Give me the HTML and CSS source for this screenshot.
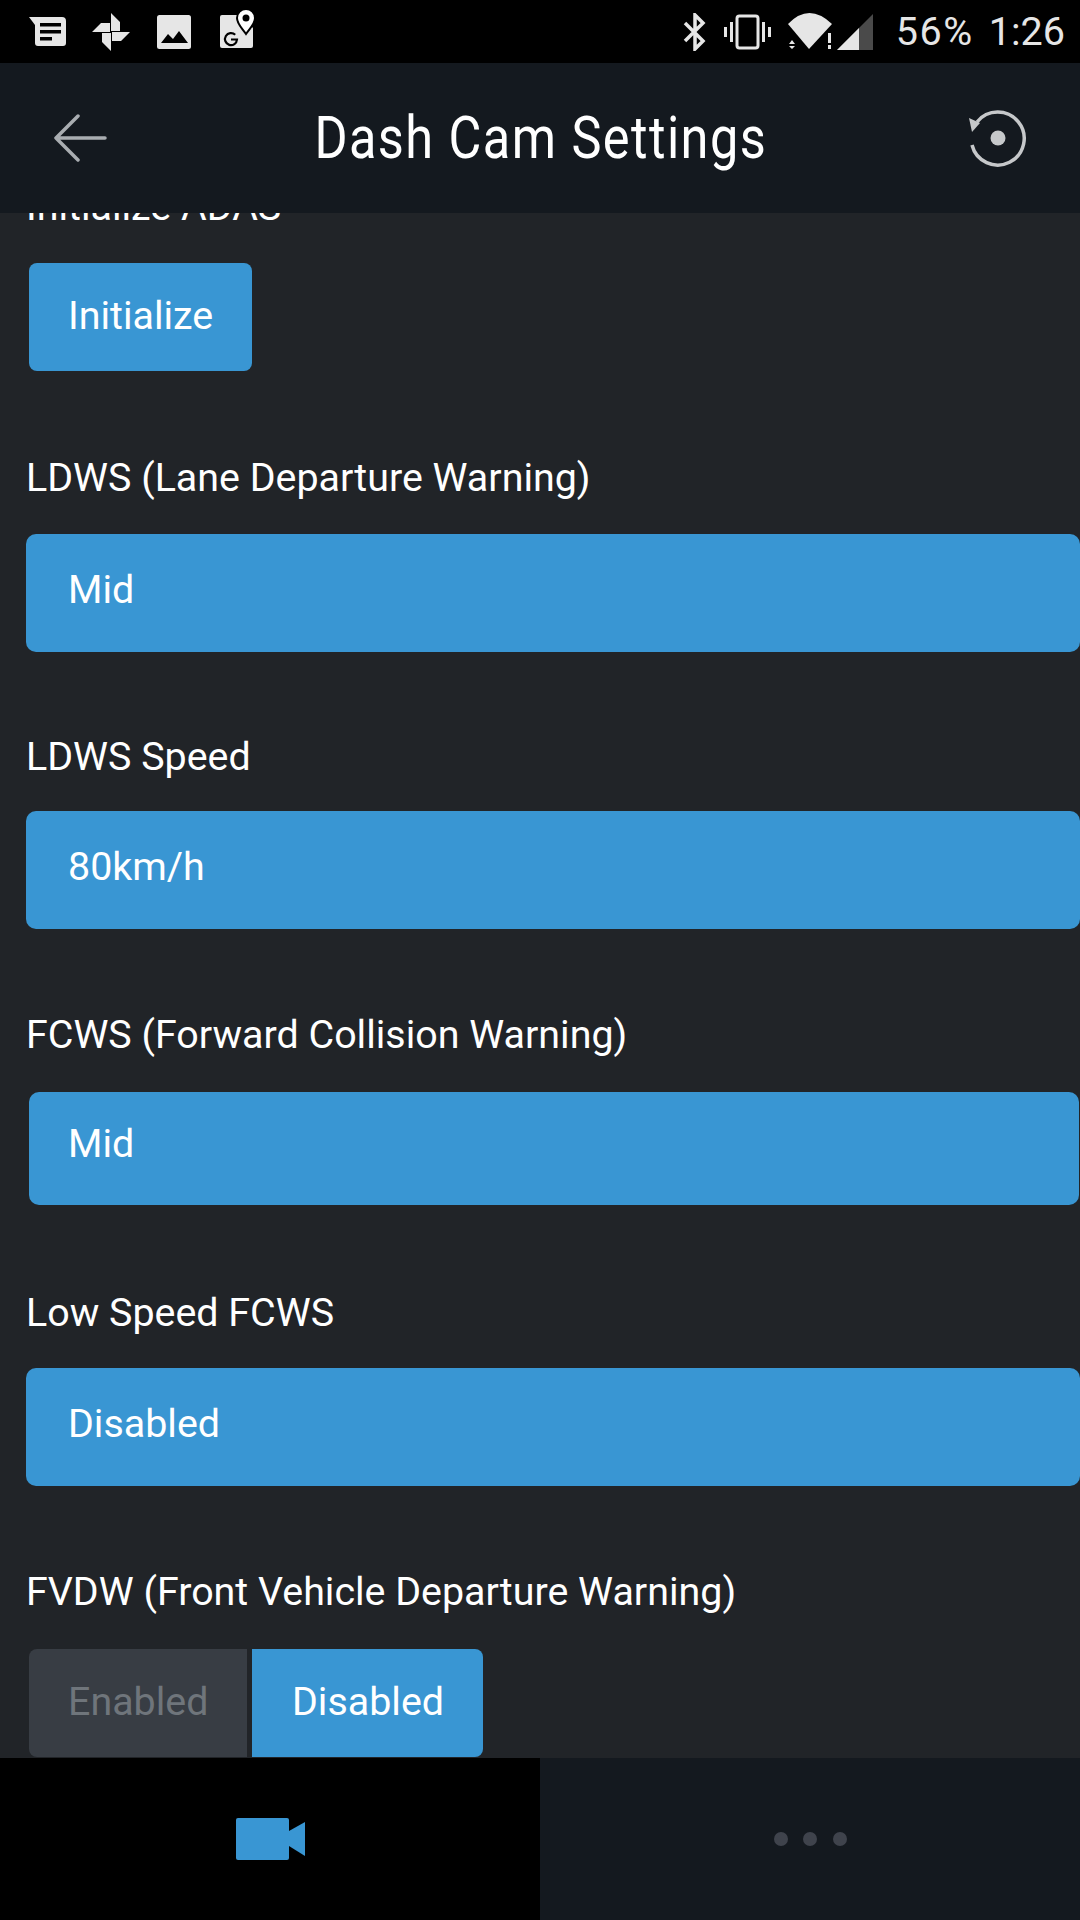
FILE: index.html
```html
<!DOCTYPE html>
<html lang="en">
<head>
    <meta charset="UTF-8">
    <meta name="viewport" content="width=device-width, initial-scale=1.0">
    <title>Dash Cam Settings</title>
    <link rel="stylesheet" href="styles.css">
</head>
<body>
    <div class="app">
        <div class="statusBar">
            <div class="statusLeft">
                <svg class="sIcon news" viewBox="0 0 38 32"><path d="M0 1h33a4 4 0 0 1 4 4v22a3 3 0 0 1-3 3H9a3 3 0 0 1-3-3V9z" fill="#e6e6e6"/><path d="M11 7h21v3.500H11zM11 14h21v3.500H11zM11 21h12v3.500H11z" fill="#000"/></svg>
                <svg class="sIcon photos" viewBox="0 0 38 38"><g fill="#e6e6e6"><path d="M19 18V0l9 9v9zM20 19h18l-9 9h-9zM19 20v18l-9-9v-9zM18 19H0l9-9h9z"/></g></svg>
                <svg class="sIcon gallery" viewBox="0 0 34 34"><rect width="34" height="34" rx="2.500" fill="#e6e6e6"/><path d="M4 28l7-9 5 5 6-8 9 12z" fill="#000"/></svg>
                <svg class="sIcon maps" viewBox="0 0 36 40"><path d="M2 6h18l13 13v18a2 2 0 0 1-2 2H2a2 2 0 0 1-2-2V8a2 2 0 0 1 2-2z" fill="#e6e6e6"/><path d="M26 0a9 9 0 0 1 9 9c0 6-5 10-9 16-4-6-9-10-9-16a9 9 0 0 1 9-9z" fill="#fff" stroke="#000" stroke-width="2"/><circle cx="26" cy="9" r="3.500" fill="#000"/><path d="M15.200 25.800A6 6 0 1 0 17 30.500H11" fill="none" stroke="#000" stroke-width="2.200"/></svg>
            </div>
            <div class="statusRight">
                <svg class="sIcon bt" viewBox="0 0 24 38"><path d="M2 10l18 18-8 8V2l8 8L2 28" fill="none" stroke="#e6e6e6" stroke-width="3.500"/></svg>
                <svg class="sIcon vib" viewBox="0 0 48 36"><rect x="13" y="2" width="21" height="32" rx="2.500" fill="none" stroke="#e6e6e6" stroke-width="3"/><path d="M0 13h3v10H0zM6 8h3v20H6zM38 8h3v20h-3zM44 13h3v10h-3z" fill="#e6e6e6"/></svg>
                <svg class="sIcon wifi" viewBox="0 0 46 37"><path d="M1 11Q22-11 45 11L22 36z" fill="#e6e6e6"/><path d="M2 31l3-4 3 4zM2 33h6l-3 3zM41 20h3v10h-3zM41 32h3v4h-3z" fill="#e6e6e6"/></svg>
                <svg class="sIcon signal" viewBox="0 0 36 36"><path d="M0 36L36 0v36z" fill="#4a4a4a"/><path d="M0 36l22-22v22z" fill="#e6e6e6"/></svg>
                <span class="battery">56%</span>
                <span class="clock">1:26</span>
            </div>
        </div>

        <div class="header">
            <svg class="backIcon" viewBox="0 0 54 48"><path d="M52 24H3M25 2L3 24l22 22" fill="none" stroke="#a9adb1" stroke-width="3.500" stroke-linecap="round" stroke-linejoin="round"/></svg>
            <h1 class="title">Dash Cam Settings</h1>
            <svg class="resetIcon" viewBox="0 0 60 60"><path d="M9 14A26.500 26.500 0 1 1 4 37" fill="none" stroke="#c6c8ca" stroke-width="3.500"/><path d="M1 10l11 5-8 9z" fill="#c6c8ca"/><circle cx="30" cy="30" r="7.500" fill="#c6c8ca"/></svg>
        </div>

        <div class="content">
            <div class="list">
                <div class="label topLabel">Initialize ADAS</div>
                <div class="btn initBtn">Initialize</div>

                <div class="label firstLabel">LDWS (Lane Departure Warning)</div>
                <div class="select">Mid</div>

                <div class="label speedLabel">LDWS Speed</div>
                <div class="select">80km/h</div>

                <div class="label beforeInset">FCWS (Forward Collision Warning)</div>
                <div class="select inset">Mid</div>

                <div class="label afterInset">Low Speed FCWS</div>
                <div class="select">Disabled</div>

                <div class="label beforeToggle">FVDW (Front Vehicle Departure Warning)</div>
                <div class="toggle">
                    <div class="btn off">Enabled</div>
                    <div class="btn on">Disabled</div>
                </div>
            </div>
        </div>

        <div class="footer">
            <div class="tab tabActive">
                <svg class="camIcon" viewBox="0 0 69 42"><path d="M2 0h49a2 2 0 0 1 2 2v38a2 2 0 0 1-2 2H2a2 2 0 0 1-2-2V2a2 2 0 0 1 2-2z" fill="#3996d3"/><path d="M53 13L69 4v34L53 28z" fill="#3996d3"/></svg>
            </div>
            <div class="tab">
                <span class="dot"></span>
                <span class="dot"></span>
                <span class="dot"></span>
            </div>
        </div>
    </div>
</body>
</html>
```

FILE: styles.css
```css
*{
    box-sizing: border-box;
}
body{
    margin: 0;
    background: #000;
    font-family: Roboto, sans-serif;
    color: #fff;
}
.app{
    width: 1080px;
    height: 1920px;
    display: flex;
    flex-direction: column;
    overflow: hidden;
}

/* status bar */
.statusBar{
    height: 63px;
    background: #000;
    display: flex;
    justify-content: space-between;
    align-items: center;
    flex-shrink: 0;
}
.statusLeft{
    display: flex;
    align-items: center;
    padding-left: 29px;
}
.statusRight{
    display: flex;
    align-items: center;
    padding-right: 15px;
}
.sIcon{
    display: block;
}
.news{
    width: 38px;
    height: 32px;
    margin-right: 25px;
}
.photos{
    width: 38px;
    height: 38px;
    margin-right: 27px;
}
.gallery{
    width: 34px;
    height: 34px;
    margin-right: 29px;
}
.maps{
    width: 36px;
    height: 40px;
    margin-top: -6px;
}
.bt{
    width: 24px;
    height: 38px;
    margin-right: 17px;
}
.vib{
    width: 48px;
    height: 36px;
    margin-right: 15px;
}
.wifi{
    width: 46px;
    height: 37px;
    margin-right: 4px;
}
.signal{
    width: 36px;
    height: 36px;
    margin-right: 23px;
}
.battery,
.clock{
    font-size: 39.500px;
    color: #e6e6e6;
    line-height: 42px;
}
.battery{
    letter-spacing: 1.600px;
    margin-right: 15px;
}

/* header */
.header{
    height: 150px;
    background: #14191f;
    display: flex;
    align-items: center;
    justify-content: space-between;
    padding: 0 52px 0 53px;
    flex-shrink: 0;
}
.backIcon{
    width: 54px;
    height: 48px;
}
.resetIcon{
    width: 60px;
    height: 60px;
}
.title{
    margin: 0 0 0 7px;
    font-size: 59px;
    font-weight: 400;
    line-height: 70px;
    letter-spacing: 1.700px;
    transform: scaleX(0.855);
    white-space: nowrap;
}

/* settings list */
.content{
    flex: 1;
    background: #212428;
    overflow: hidden;
}
.list{
    margin-top: -31px;
}
.label{
    font-size: 39.400px;
    line-height: 50px;
    padding-left: 26px;
    margin-top: 81px;
    margin-bottom: 29px;
}
.topLabel{
    margin-top: -2px;
    margin-bottom: 31px;
}
.firstLabel{
    margin-top: 82px;
    margin-bottom: 31px;
}
.speedLabel{
    margin-top: 80px;
}
.beforeInset{
    margin-bottom: 32px;
}
.afterInset{
    margin-top: 83px;
    margin-bottom: 30px;
}
.beforeToggle{
    margin-bottom: 32px;
}
.btn{
    height: 108px;
    font-size: 39.400px;
    line-height: 105px;
    padding: 0 39px;
}
.initBtn{
    width: 223px;
    margin-left: 29px;
    background: #3996d3;
    border-radius: 8px;
}
.select{
    height: 118px;
    margin-left: 26px;
    padding-left: 42px;
    background: #3996d3;
    border-radius: 10px;
    font-size: 39.400px;
    line-height: 111px;
}
.inset{
    height: 113px;
    margin-left: 29px;
    margin-right: 1px;
    padding-left: 39px;
    line-height: 104px;
}
.toggle{
    display: flex;
    margin-left: 29px;
}
.off{
    width: 218px;
    background: #383d44;
    color: #6f757b;
    border-radius: 8px 0 0 8px;
    margin-right: 5px;
}
.on{
    width: 231px;
    padding: 0 40px;
    background: #3996d3;
    border-radius: 0 8px 8px 0;
}

/* bottom tabs */
.footer{
    height: 162px;
    display: flex;
    flex-shrink: 0;
}
.tab{
    width: 50%;
    background: #14191f;
    display: flex;
    align-items: center;
    justify-content: center;
    gap: 15.500px;
}
.tabActive{
    background: #000;
}
.camIcon{
    width: 69px;
    height: 42px;
}
.dot{
    width: 14px;
    height: 14px;
    border-radius: 50%;
    background: #3f434c;
}
```
